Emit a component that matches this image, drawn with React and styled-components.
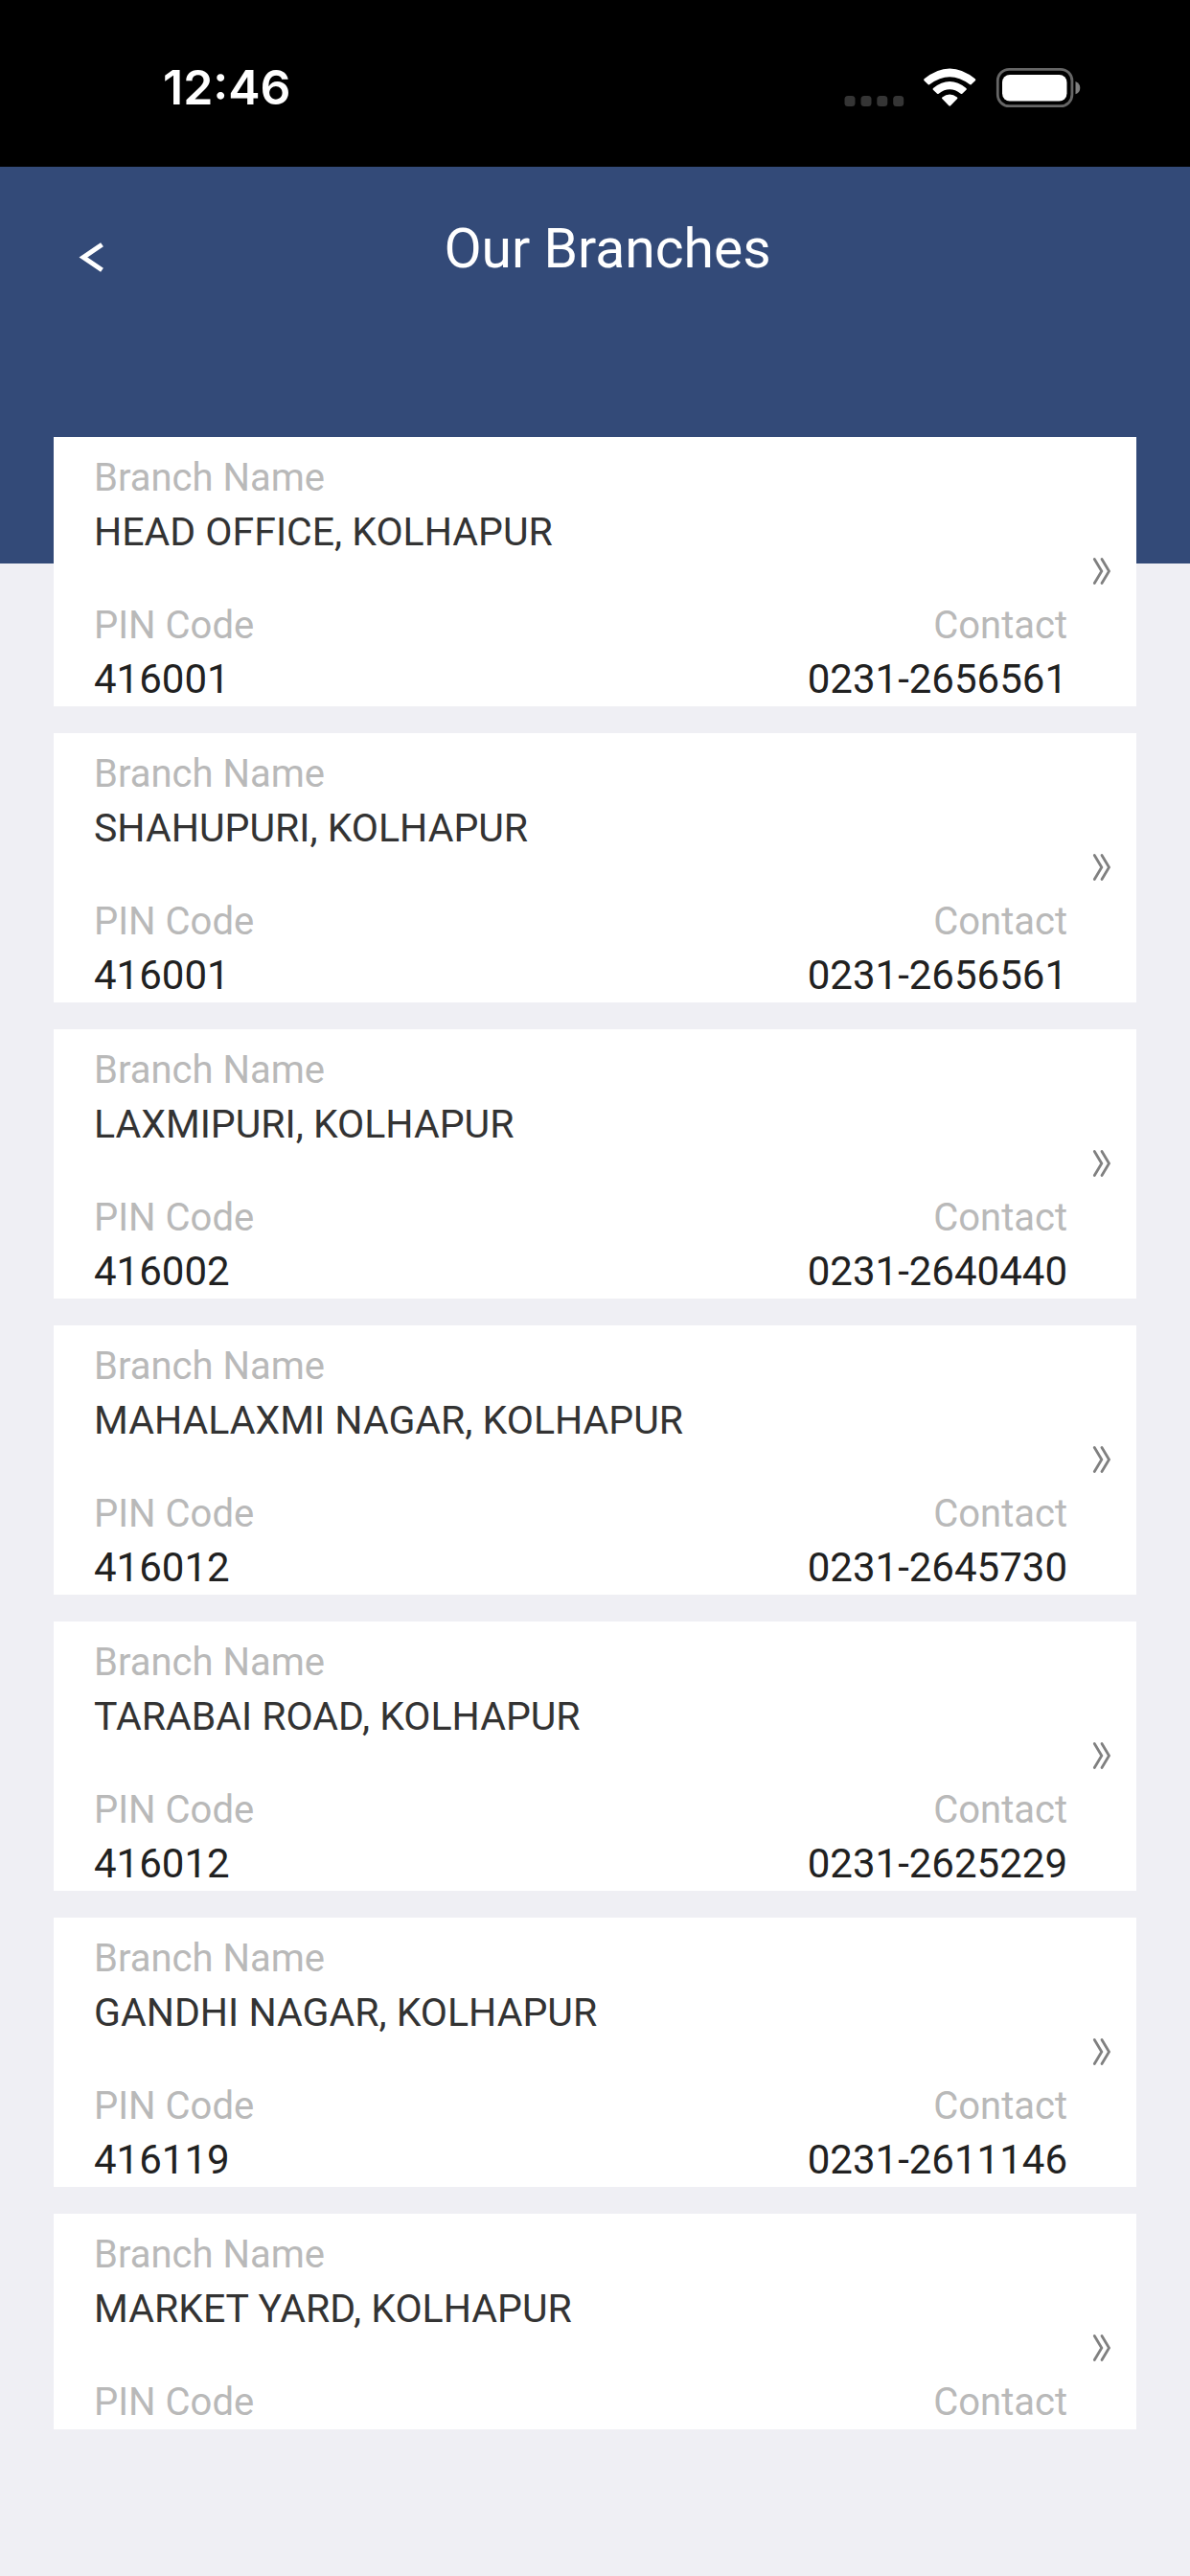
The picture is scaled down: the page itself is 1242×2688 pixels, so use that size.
import React from "react";
import styled, { createGlobalStyle } from "styled-components";

const GlobalStyle = createGlobalStyle`
  *, *::before, *::after { box-sizing: border-box; }
  body { margin: 0; background: #efeff4; }
`;

const Screen = styled.div`
  display: flex;
  flex-direction: column;
  min-height: 100vh;
  background: #efeff4;
  font-family: Roboto, "Noto Sans", sans-serif;
`;

const StatusBar = styled.div`
  display: flex;
  flex: none;
  align-items: center;
  justify-content: space-between;
  height: 174px;
  padding: 8px 114px 0 170px;
  background: #000;
  color: #fff;
`;

const Clock = styled.time`
  font: 600 50px/60px Inter, Roboto, sans-serif;
`;

const StatusIcons = styled.svg`
  display: block;
  width: 248px;
  height: 44px;
`;

const Header = styled.header`
  display: grid;
  flex: none;
  grid-template-columns: 110px 1fr 84px;
  align-items: start;
  height: 414px;
  padding: 54px 0 0 0;
  background: #334a78;
  color: #fff;
`;

const BackButton = styled.button`
  display: flex;
  align-items: center;
  justify-content: flex-end;
  height: 82px;
  padding: 0;
  border: 0;
  background: none;
  color: inherit;
`;

const Title = styled.h1`
  margin: 0;
  font-size: 57px;
  font-weight: 400;
  line-height: 64px;
  text-align: center;
`;

const BranchList = styled.ul`
  display: flex;
  flex-direction: column;
  gap: 28px;
  margin: -132px 56px 0;
  padding: 0;
  list-style: none;
`;

const BranchCard = styled.a`
  display: grid;
  grid-template-columns: 1fr 72px;
  background: #fff;
  color: inherit;
  text-decoration: none;
`;

const Details = styled.div`
  display: grid;
  gap: 42px;
  padding: 15px 0 0 42px;
`;

const DetailRow = styled.div`
  display: flex;
  justify-content: space-between;
`;

const Field = styled.div`
  display: flex;
  flex-direction: column;
  text-align: ${(p) => p.$align || "left"};
  line-height: 56px;
`;

const Label = styled.span`
  color: #b9b9b9;
  font-size: 40px;
`;

const Name = styled.span`
  color: #333;
  font-size: 41px;
`;

const Value = styled.span`
  color: #212121;
  font-size: 42px;
`;

const Chevrons = styled.svg`
  display: block;
  justify-self: center;
  width: 20px;
  height: 30px;
  margin-top: 125px;
`;

const branches = [
  { name: "HEAD OFFICE, KOLHAPUR", pin: "416001", contact: "0231-2656561" },
  { name: "SHAHUPURI, KOLHAPUR", pin: "416001", contact: "0231-2656561" },
  { name: "LAXMIPURI, KOLHAPUR", pin: "416002", contact: "0231-2640440" },
  { name: "MAHALAXMI NAGAR, KOLHAPUR", pin: "416012", contact: "0231-2645730" },
  { name: "TARABAI ROAD, KOLHAPUR", pin: "416012", contact: "0231-2625229" },
  { name: "GANDHI NAGAR, KOLHAPUR", pin: "416119", contact: "0231-2611146" },
  { name: "MARKET YARD, KOLHAPUR" },
];

function Branch({ name, pin, contact }) {
  return (
    <li>
      <BranchCard href="#branch">
        <Details>
          <Field>
            <Label>Branch Name</Label>
            <Name>{name}</Name>
          </Field>
          <DetailRow>
            <Field>
              <Label>PIN Code</Label>
              {pin && <Value>{pin}</Value>}
            </Field>
            <Field $align="right">
              <Label>Contact</Label>
              {contact && <Value>{contact}</Value>}
            </Field>
          </DetailRow>
        </Details>
        <Chevrons viewBox="0 0 20 30" fill="none" stroke="#808080" strokeWidth="2.8" strokeLinecap="round" aria-hidden="true">
          <path d="M2.3 2.5 9.8 15 2.3 27.5M10 2.5 17.5 15 10 27.5" />
        </Chevrons>
      </BranchCard>
    </li>
  );
}

export default function App() {
  return (
    <>
      <GlobalStyle />
      <Screen>
        <StatusBar>
          <Clock>12:46</Clock>
          <StatusIcons viewBox="880 68 248 44" aria-hidden="true">
            <g fill="#353535">
              <rect x="881.5" y="99" width="11" height="11" rx="3.5" />
              <rect x="898.5" y="99" width="11" height="11" rx="3.5" />
              <rect x="915.3" y="99" width="11" height="11" rx="3.5" />
              <rect x="932.2" y="99" width="11" height="11" rx="3.5" />
            </g>
            <g fill="#fff">
              <path d="M964.6 81.3Q991.2 59.6 1017.8 81.3Q1018.7 82.3 1017.8 83.2L1013.6 87.2Q1012.9 87.8 1012 87.1Q991.2 71.4 970.4 87.1Q969.5 87.8 968.8 87.2L964.6 83.2Q963.7 82.3 964.6 81.3Z" />
              <path d="M974 90.9Q991.2 77 1008.4 90.9Q1009.4 91.8 1008.5 92.7L1004.3 96.8Q1003.6 97.4 1002.7 96.7Q991.2 87.8 979.7 96.7Q978.8 97.4 978.1 96.8L973.9 92.7Q973 91.8 974 90.9Z" />
              <path d="M983.4 100.4Q991.2 94.4 999 100.4Q999.9 101.2 999.1 102L992.1 109.2Q991.2 110.1 990.3 109.2L983.3 102Q982.5 101.2 983.4 100.4Z" />
            </g>
            <rect x="1041.3" y="71.3" width="77.6" height="38.4" rx="12" fill="none" stroke="#666" strokeWidth="2.8" />
            <rect x="1046" y="77" width="67.5" height="27.5" rx="8" fill="#fff" />
            <path d="M1122.5 84Q1127.3 86 1127.3 90.7T1122.5 97.3Z" fill="#808080" />
          </StatusIcons>
        </StatusBar>
        <Header>
          <BackButton type="button" aria-label="Back">
            <svg width="28" height="34" viewBox="0 0 28 34" fill="none" stroke="#fff" strokeWidth="5" aria-hidden="true">
              <path d="M24.5 3.2 5 16.5 24.5 29.8" />
            </svg>
          </BackButton>
          <Title>Our Branches</Title>
        </Header>
        <BranchList>
          {branches.map((branch) => (
            <Branch key={branch.name} {...branch} />
          ))}
        </BranchList>
      </Screen>
    </>
  );
}
